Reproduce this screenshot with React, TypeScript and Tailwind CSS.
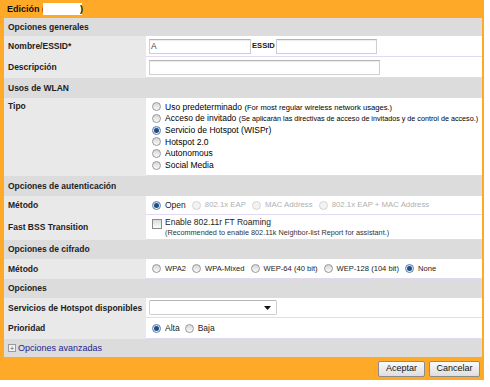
import React from "react";

function Radio({ checked, disabled }: { checked?: boolean; disabled?: boolean }) {
  return (
    <span
      className={`inline-flex h-[9px] w-[9px] shrink-0 items-center justify-center rounded-full border ${
        disabled
          ? "border-[#d4d4d4] bg-[#f3f3f3]"
          : checked
          ? "border-[#5b7fa8] bg-gradient-to-b from-[#c9dcef] to-[#f4f8fc]"
          : "border-[#999999] bg-gradient-to-b from-[#d6d6d6] to-[#fbfbfb]"
      }`}
    >
      {checked && <span className="h-[5px] w-[5px] rounded-full bg-[#1f4e85]" />}
    </span>
  );
}

function Opt({ label, checked, disabled }: { label: string; checked?: boolean; disabled?: boolean }) {
  return (
    <span className="flex items-center gap-[4px]">
      <Radio checked={checked} disabled={disabled} />
      <span className={disabled ? "text-[7.8px] text-[#b0b0b0]" : "text-[#222]"}>{label}</span>
    </span>
  );
}

function Section({ title, h }: { title: string; h: string }) {
  return (
    <div className={`flex items-center bg-[#dcdcdc] pl-[4px] font-bold text-[#222] ${h}`}>{title}</div>
  );
}

function Row({ label, h, top, children }: { label: string; h: string; top?: boolean; children: React.ReactNode }) {
  return (
    <div className={`flex ${h}`}>
      <div
        className={`flex w-[142px] shrink-0 bg-[#e9e9e9] pl-[4px] font-bold text-[#222] ${
          top ? "items-start pt-[4px]" : "items-center"
        }`}
      >
        {label}
      </div>
      <div className="flex flex-1 items-center border-b border-[#e2daf5] bg-white pl-[3px]">{children}</div>
    </div>
  );
}

const inputCls =
  "h-[15px] border border-[#cfcfcf] border-t-[#b5b5b5] bg-white shadow-[inset_0_1px_1px_rgba(0,0,0,0.08)]";

export default function App() {
  return (
    <div
      className="h-[387px] w-[490px] bg-white text-[8.5px] leading-none"
      style={{ fontFamily: '"Liberation Sans", Arial, sans-serif' }}
    >
      <div className="flex h-[380px] w-[484px] flex-col bg-[#ffa929]">
        <div className="flex h-[18px] items-center pl-[7px] text-[9px] font-bold text-[#111]">
          <span>Edición (</span>
          <span className="mx-[-2px] h-[12px] w-[39px] bg-white" />
          <span>)</span>
        </div>

        <div className="ml-[4px] mr-[2px] flex flex-col">
          <Section title="Opciones generales" h="h-[18px]" />
          <Row label="Nombre/ESSID*" h="h-[21px]">
            <div className={`${inputCls} flex w-[102px] items-center pl-[1px] text-[#444]`}>A</div>
            <span className="mx-[1px] text-[7.6px] font-bold text-[#222]">ESSID</span>
            <div className={`${inputCls} w-[101px]`} />
          </Row>
          <Row label="Descripción" h="h-[21px]">
            <div className={`${inputCls} w-[231px]`} />
          </Row>

          <Section title="Usos de WLAN" h="h-[20px]" />
          <Row label="Tipo" h="h-[78px]" top>
            <div className="flex h-full flex-col pl-[3px] pt-[3px]">
              <div className="flex h-[11.7px] items-center gap-[4px]">
                <Radio />
                <span>
                  Uso predeterminado <span className="text-[7.6px]">(For most regular wireless network usages.)</span>
                </span>
              </div>
              <div className="flex h-[11.7px] items-center gap-[4px]">
                <Radio />
                <span>
                  Acceso de invitado{" "}
                  <span className="text-[7.2px]">
                    (Se aplicarán las directivas de acceso de invitados y de control de acceso.)
                  </span>
                </span>
              </div>
              <div className="flex h-[11.7px] items-center gap-[4px]">
                <Radio checked />
                <span>Servicio de Hotspot (WISPr)</span>
              </div>
              <div className="flex h-[11.7px] items-center gap-[4px]">
                <Radio />
                <span>Hotspot 2.0</span>
              </div>
              <div className="flex h-[11.7px] items-center gap-[4px]">
                <Radio />
                <span>Autonomous</span>
              </div>
              <div className="flex h-[11.7px] items-center gap-[4px]">
                <Radio />
                <span>Social Media</span>
              </div>
            </div>
          </Row>

          <Section title="Opciones de autenticación" h="h-[20px]" />
          <Row label="Método" h="h-[19px]">
            <div className="flex items-center gap-[6px] pl-[3px]">
              <Opt label="Open" checked />
              <Opt label="802.1x EAP" disabled />
              <Opt label="MAC Address" disabled />
              <Opt label="802.1x EAP + MAC Address" disabled />
            </div>
          </Row>
          <Row label="Fast BSS Transition" h="h-[25px]">
            <div className="flex items-start gap-[3px] pl-[3px]">
              <span className="mt-[1px] h-[10px] w-[10px] shrink-0 border border-[#8a8a8a] bg-gradient-to-b from-[#dcdcdc] to-[#fcfcfc]" />
              <div className="flex flex-col gap-[2px]">
                <span className="text-[#222]">Enable 802.11r FT Roaming</span>
                <span className="text-[7.3px] text-[#333]">
                  (Recommended to enable 802.11k Neighbor-list Report for assistant.)
                </span>
              </div>
            </div>
          </Row>

          <Section title="Opciones de cifrado" h="h-[19px]" />
          <Row label="Método" h="h-[20px]">
            <div className="flex items-center gap-[6px] pl-[3px] text-[7.6px]">
              <Opt label="WPA2" />
              <Opt label="WPA-Mixed" />
              <Opt label="WEP-64 (40 bit)" />
              <Opt label="WEP-128 (104 bit)" />
              <Opt label="None" checked />
            </div>
          </Row>

          <Section title="Opciones" h="h-[19px]" />
          <Row label="Servicios de Hotspot disponibles" h="h-[20px]">
            <div className="flex h-[15px] w-[128px] items-center justify-end rounded-[2px] border border-[#cfcfcf] border-t-[#b5b5b5] bg-white pr-[5px]">
              <svg width="7" height="4" viewBox="0 0 7 4">
                <path d="M0 0h7L3.5 4z" fill="#111" />
              </svg>
            </div>
          </Row>
          <Row label="Prioridad" h="h-[21px]">
            <div className="flex items-center gap-[5px] pl-[3px]">
              <Opt label="Alta" checked />
              <Opt label="Baja" />
            </div>
          </Row>
          <div className="flex h-[18px] items-center gap-[2px] bg-[#dcdcdc] pl-[4px]">
            <span className="flex h-[8px] w-[8px] items-center justify-center border border-[#999] bg-[#f2f2f2] text-[7px] leading-none text-[#555]">
              +
            </span>
            <span className="text-[9px] text-[#1c238c]">Opciones avanzadas</span>
          </div>
        </div>

        <div className="flex flex-1 items-center justify-end gap-[4px] pr-[4px]">
          <button className="h-[16px] w-[47px] rounded-[2px] border border-[#8c8c8c] bg-gradient-to-b from-[#fafafa] to-[#dedede] text-[9px] text-[#111]">
            Aceptar
          </button>
          <button className="h-[16px] w-[51px] rounded-[2px] border border-[#8c8c8c] bg-gradient-to-b from-[#fafafa] to-[#dedede] text-[9px] text-[#111]">
            Cancelar
          </button>
        </div>
      </div>
    </div>
  );
}
